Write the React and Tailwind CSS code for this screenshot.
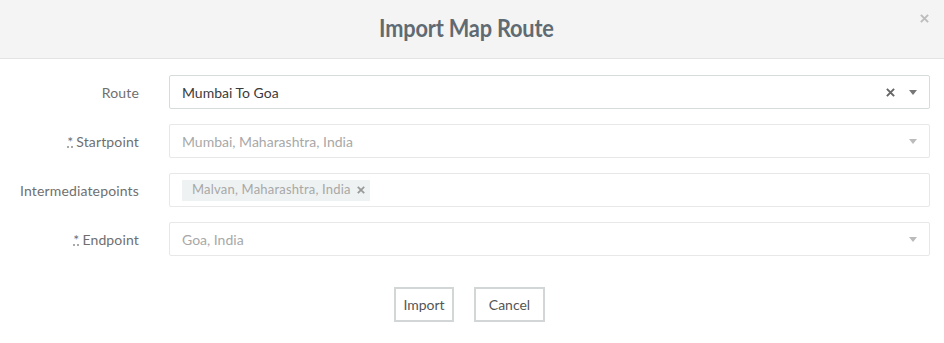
import React from "react";

const Caret = ({ className = "" }) => (
  <svg width="8" height="5" viewBox="0 0 8 5" className={className}>
    <path d="M0 0 L8 0 L4 5 Z" fill="currentColor" />
  </svg>
);

const Cross = ({ size = 9, className = "" }) => (
  <svg width={size} height={size} viewBox="0 0 10 10" className={className}>
    <path d="M1 1 L9 9 M9 1 L1 9" stroke="currentColor" strokeWidth="2.2" />
  </svg>
);

const Req = () => (
  <span className="inline-block leading-[8px] border-b-2 border-dotted border-[#aaa] mr-[3px]">*</span>
);

const Row = ({ label, required, children }) => (
  <div className="flex items-center">
    <div className="w-[139px] text-right text-[14px] tracking-[0.15px] text-[#6f6f6f] shrink-0">
      {required && <Req />}
      {label}
    </div>
    <div className="flex-1 ml-[30px]">{children}</div>
  </div>
);

export default function App() {
  return (
    <div className="w-[944px] h-[343px] bg-white font-['Lato',sans-serif]">
      {/* header */}
      <div className="relative h-[59px] bg-[#f4f4f4] border-b border-[#e3e3e3] flex items-center justify-center pr-[12px]">
        <h1 className="text-[25px] font-bold text-[#5f6a72] tracking-[-0.2px] scale-x-[0.87] pb-[3px]">
          Import Map Route
        </h1>
        <button className="absolute right-[15px] top-[14px] text-[#bdbdbd]">
          <Cross size={9} />
        </button>
      </div>

      {/* form */}
      <div className="pt-[16px] pr-[14px] flex flex-col gap-[15px]">
        <Row label="Route">
          <div className="h-[34px] border border-[#d6dcdc] rounded-[2px] flex items-center px-[12px] text-[14px] text-[#3a3a3a]">
            <span className="flex-1">Mumbai To Goa</span>
            <Cross size={9} className="text-[#666] mr-[14px]" />
            <Caret className="text-[#777]" />
          </div>
        </Row>
        <Row label="Startpoint" required>
          <div className="h-[34px] border border-[#e8e8e8] rounded-[2px] flex items-center px-[12px] text-[14px] text-[#a8a8a8]">
            <span className="flex-1">Mumbai, Maharashtra, India</span>
            <Caret className="text-[#bbb]" />
          </div>
        </Row>
        <Row label="Intermediatepoints">
          <div className="h-[34px] border border-[#e8e8e8] rounded-[2px] flex items-center px-[12px]">
            <span className="flex items-center gap-[6px] bg-[#eff2f2] h-[21px] pl-[10px] pr-[5px] text-[13px] tracking-[0.2px] text-[#a8a8a8]">
              Malvan, Maharashtra, India
              <Cross size={8} className="text-[#999]" />
            </span>
          </div>
        </Row>
        <Row label="Endpoint" required>
          <div className="h-[34px] border border-[#e8e8e8] rounded-[2px] flex items-center px-[12px] text-[14px] text-[#a8a8a8]">
            <span className="flex-1">Goa, India</span>
            <Caret className="text-[#bbb]" />
          </div>
        </Row>
      </div>

      {/* actions */}
      <div className="flex justify-center gap-[20px] mt-[31px] pr-[5px]">
        <button className="w-[60px] h-[35px] border-2 border-[#d3d6d6] text-[14px] text-[#555]">Import</button>
        <button className="w-[71px] h-[35px] border-2 border-[#d3d6d6] text-[14px] text-[#555]">Cancel</button>
      </div>
    </div>
  );
}
